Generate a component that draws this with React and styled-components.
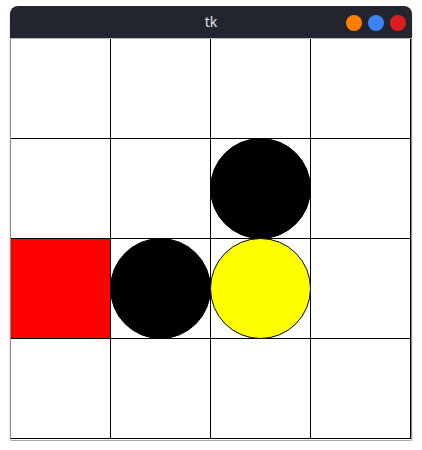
import React from "react";
import styled, { createGlobalStyle } from "styled-components";

const GlobalStyle = createGlobalStyle`
  html, body {
    margin: 0;
    padding: 0;
    background: #ffffff;
  }
  body {
    font-family: "Noto Sans", "DejaVu Sans", sans-serif;
  }
`;

// Outer page spacing around the window
const Page = styled.div`
  padding: 6px 0 0 10px;
`;

// Window frame
const Window = styled.div`
  width: 402px;
  border-radius: 8px 8px 3px 3px;
  background: #ffffff;
  box-shadow: 0 1px 1px rgba(0, 0, 0, 0.25), 0 2px 2px rgba(0, 0, 0, 0.15);
  overflow: hidden;
`;

// Title bar
const TitleBar = styled.div`
  height: 32px;
  background: #23252e;
  display: grid;
  grid-template-columns: 1fr auto 1fr;
  align-items: center;
  padding: 0 6px;
  box-sizing: border-box;
`;

const Title = styled.div`
  grid-column: 2;
  color: #e4e4e6;
  font-size: 14px;
  line-height: 1;
  margin-top: -1px;
`;

const Controls = styled.div`
  grid-column: 3;
  justify-self: end;
  display: flex;
  gap: 6px;
  margin-top: 1px;
`;

const Dot = styled.span`
  width: 16px;
  height: 16px;
  border-radius: 50%;
  background: ${(p) => p.$color};
`;

// Body of the window (the canvas)
const Body = styled.div`
  border: 1px solid #8c8c8c;
  border-top-color: #b8b8bc;
  border-bottom-color: #a8a8a8;
  padding-bottom: 1px;
  display: grid;
  grid-template-columns: repeat(4, 100px);
  grid-auto-rows: 100px;
`;

const Cell = styled.div`
  position: relative;
  box-sizing: border-box;
  border-right: 1px solid #000;
  border-bottom: 1px solid #000;
  background: ${(p) => p.$fill || "#ffffff"};
`;

const Disc = styled.div`
  position: absolute;
  left: -1px;
  top: -1px;
  width: 101px;
  height: 101px;
  box-sizing: border-box;
  border: 1px solid #000;
  border-radius: 50%;
  background: ${(p) => p.$color};
`;

const board = [
  [null, null, null, null],
  [null, null, "disc:#000000", null],
  ["sq:#ff0000", "disc:#000000", "disc:#ffff00", null],
  [null, null, null, null],
];

export default function App() {
  return (
    <>
      <GlobalStyle />
      <Page>
        <Window>
          <TitleBar>
            <Title>tk</Title>
            <Controls>
              <Dot $color="#fd7f00" />
              <Dot $color="#3b82f2" />
              <Dot $color="#d81e1e" />
            </Controls>
          </TitleBar>
          <Body>
            {board.flat().map((item, i) => {
              if (!item) return <Cell key={i} />;
              const [kind, color] = item.split(":");
              if (kind === "sq") return <Cell key={i} $fill={color} />;
              return (
                <Cell key={i}>
                  <Disc $color={color} />
                </Cell>
              );
            })}
          </Body>
        </Window>
      </Page>
    </>
  );
}
